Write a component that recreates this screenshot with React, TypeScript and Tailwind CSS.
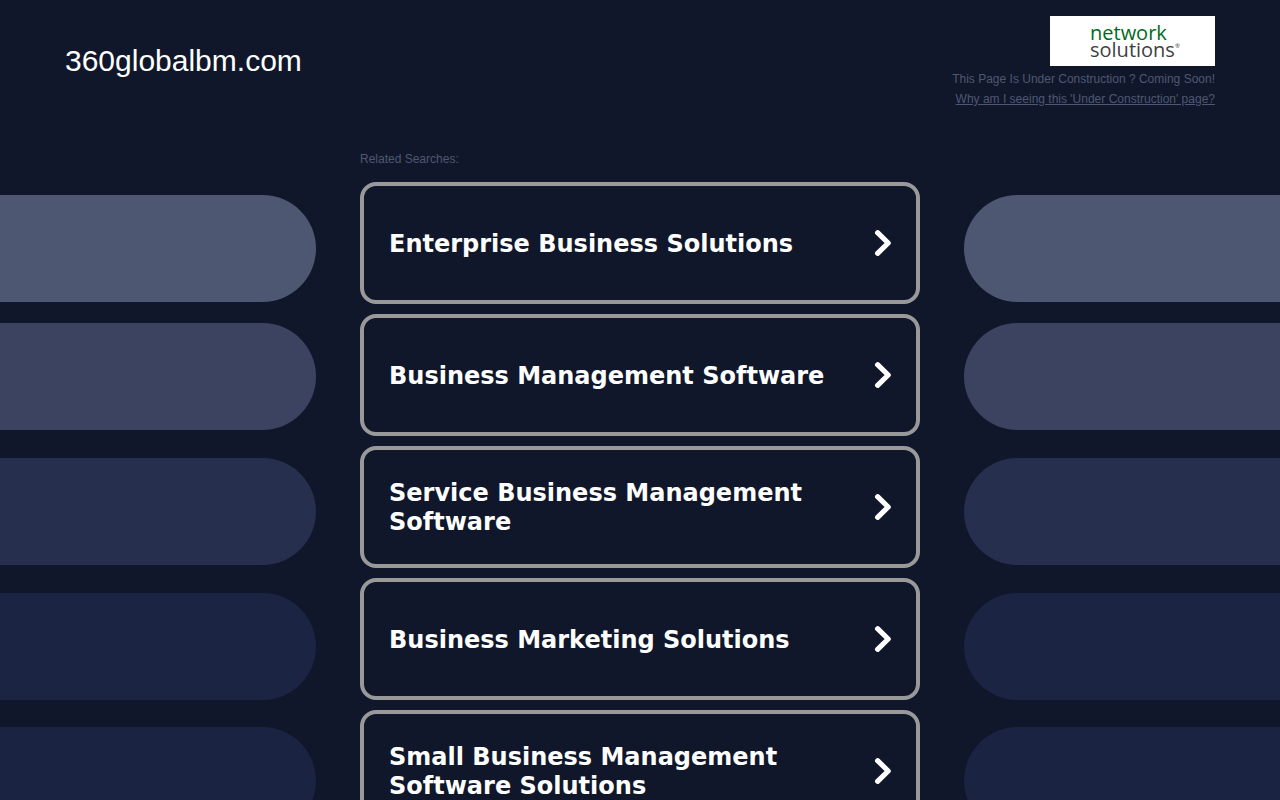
const searches = [
  "Enterprise Business Solutions",
  "Business Management Software",
  "Service Business Management Software",
  "Business Marketing Solutions",
  "Small Business Management Software Solutions",
];

const pillShades = [
  "bg-[#4e5772]",
  "mt-[21px] bg-[#3b4361]",
  "mt-[28px] bg-[#262f4e]",
  "mt-[28px] bg-[#1b2443]",
  "mt-[27px] bg-[#1a2341]",
];

function Pills({ side }: { side: "left" | "right" }) {
  const edge = side === "left" ? "mr-11 rounded-r-full" : "ml-11 rounded-l-full";
  return (
    <div aria-hidden="true" className="min-w-0 pt-[46px]">
      {pillShades.map((shade) => (
        <div key={shade} className={`h-[107px] ${edge} ${shade}`} />
      ))}
    </div>
  );
}

function Logo() {
  return (
    <div className="flex h-[50px] w-[165px] flex-col justify-center bg-white pl-10 font-['Open_Sans',sans-serif] text-[20px] leading-[17px]">
      <span className="text-[#006a20]">network</span>
      <span className="text-[#3f3f41]">
        solutions<sup className="top-[-9px] text-[6px] leading-none">®</sup>
      </span>
    </div>
  );
}

function Chevron() {
  return (
    <svg aria-hidden="true" viewBox="0 0 18 28" className="h-7 w-[18px] shrink-0" fill="none">
      <path d="M3.6 3.7 L14.2 14 L3.6 24.3" stroke="#fff" strokeWidth="5.2" strokeLinecap="round" strokeLinejoin="round" />
    </svg>
  );
}

export default function App() {
  return (
    <div className="min-h-screen bg-[#10172b] font-['Liberation_Sans',Arial,sans-serif]">
      <header className="flex items-start justify-between px-[65px] pt-4">
        <h1 className="text-[30px] leading-[90px] text-white">360globalbm.com</h1>
        <div className="flex flex-col items-end text-[12px] leading-5 text-[#4e5772]">
          <Logo />
          <p className="mt-[3px]">This Page Is Under Construction ? Coming Soon!</p>
          <a href="#why" className="underline">
            Why am I seeing this 'Under Construction' page?
          </a>
        </div>
      </header>
      <main className="mt-10 grid grid-cols-[1fr_minmax(0,560px)_1fr]">
        <Pills side="left" />
        <section>
          <h2 className="text-[12px] leading-5 text-[#4e5772]">Related Searches:</h2>
          <ul className="mt-[13px] flex flex-col gap-[10px]">
            {searches.map((label) => (
              <li key={label}>
                <a
                  href="#results"
                  className="flex min-h-[122px] items-center justify-between gap-8 rounded-2xl border-4 border-[#999] pr-6 pl-[25px] font-['DejaVu_Sans',Verdana,sans-serif] text-[24px] leading-[29px] font-bold text-white"
                >
                  <span className="pt-[2px]">{label}</span>
                  <Chevron />
                </a>
              </li>
            ))}
          </ul>
        </section>
        <Pills side="right" />
      </main>
    </div>
  );
}
